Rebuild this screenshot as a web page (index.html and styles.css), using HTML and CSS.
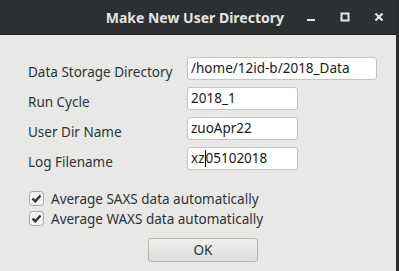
FILE: index.html
```html
<!DOCTYPE html>
<html lang="en">
<head>
  <meta charset="UTF-8">
  <title>Make New User Directory</title>
  <link rel="stylesheet" href="styles.css">
</head>
<body>
  <div class="window">
    <!-- Title bar -->
    <header class="titlebar">
      <span class="title">Make New User Directory</span>
      <div class="controls">
        <svg class="ctl" width="14" height="14" viewBox="0 0 14 14"><rect x="3" y="9" width="8" height="2" fill="#e6e6e6"/></svg>
        <svg class="ctl" width="14" height="14" viewBox="0 0 14 14"><rect x="3.5" y="3.5" width="7" height="7" fill="none" stroke="#e6e6e6" stroke-width="2"/></svg>
        <svg class="ctl" width="14" height="14" viewBox="0 0 14 14"><path d="M3.5 3.5 L10.5 10.5 M10.5 3.5 L3.5 10.5" stroke="#e6e6e6" stroke-width="2.2"/></svg>
      </div>
    </header>

    <!-- Form -->
    <section class="content">
      <div class="form">
        <label>Data Storage Directory</label>
        <div class="field wide">/home/12id-b/2018_Data</div>
        <label>Run Cycle</label>
        <div class="field">2018_1</div>
        <label>User Dir Name</label>
        <div class="field">zuoApr22</div>
        <label>Log Filename</label>
        <div class="field">xz<span class="caret"></span>05102018</div>
      </div>

      <div class="checks">
        <div class="check">
          <svg width="15" height="15" viewBox="0 0 15 15"><rect x="0.5" y="0.5" width="14" height="14" rx="3" fill="#f4f4f3" stroke="#a8a8a6"/><path d="M3.5 7.5 L6.3 10.3 L11.5 4.5" fill="none" stroke="#2e3436" stroke-width="2.4"/></svg>
          <span>Average SAXS data automatically</span>
        </div>
        <div class="check">
          <svg width="15" height="15" viewBox="0 0 15 15"><rect x="0.5" y="0.5" width="14" height="14" rx="3" fill="#f4f4f3" stroke="#a8a8a6"/><path d="M3.5 7.5 L6.3 10.3 L11.5 4.5" fill="none" stroke="#2e3436" stroke-width="2.4"/></svg>
          <span>Average WAXS data automatically</span>
        </div>
      </div>

      <div class="actions">
        <button class="btn">OK</button>
      </div>
    </section>
  </div>
</body>
</html>
```
FILE: styles.css
```css
* {
  margin: 0;
  padding: 0;
  box-sizing: border-box;
}

body {
  font-family: 'Noto Sans', 'Open Sans', sans-serif;
  background: #2b2e30;
  width: 399px;
  height: 271px;
  overflow: hidden;
  color: #2e3436;
}

.window {
  width: 396px;
  height: 271px;
  display: flex;
  flex-direction: column;
}

/* Title bar */
.titlebar {
  height: 35px;
  background: #2c3033;
  border-bottom: 1px solid #1a1c1d;
  display: flex;
  align-items: center;
  justify-content: flex-end;
  padding-right: 10px;
}

.title {
  color: #e4e4e4;
  font-weight: 700;
  font-size: 14px;
  margin-right: 20px;
}

.controls {
  display: flex;
  gap: 20px;
}

/* Content */
.content {
  flex: 1;
  background: #e8e8e7;
  padding: 22px 0 0 28px;
}

.form {
  display: grid;
  grid-template-columns: 159px auto;
  row-gap: 7px;
  align-items: start;
  font-size: 13.5px;
}

.form label {
  line-height: 15px;
  padding-top: 8px;
}

.field {
  width: 111px;
  height: 23px;
  background: #fff;
  border: 1px solid #c3c3c1;
  border-radius: 3px;
  padding: 0 3px;
  line-height: 21px;
  color: #1a1a1a;
  white-space: nowrap;
}

.field.wide {
  width: 190px;
}

.caret {
  display: inline-block;
  width: 1px;
  height: 17px;
  background: #000;
  vertical-align: -4px;
}

/* Checkboxes */
.checks {
  margin-top: 21px;
  padding-left: 1px;
  display: flex;
  flex-direction: column;
  gap: 5px;
  font-size: 13.5px;
}

.check {
  display: flex;
  align-items: center;
  gap: 7px;
  height: 15px;
}

/* Button */
.actions {
  margin-top: 12px;
  padding-left: 120px;
}

.btn {
  width: 110px;
  height: 24px;
  font-family: inherit;
  font-size: 13.5px;
  color: #2e3436;
  border: 1px solid #b6b6b3;
  border-radius: 3px;
  background: linear-gradient(#f0f0ef, #dcdcda);
}
```
